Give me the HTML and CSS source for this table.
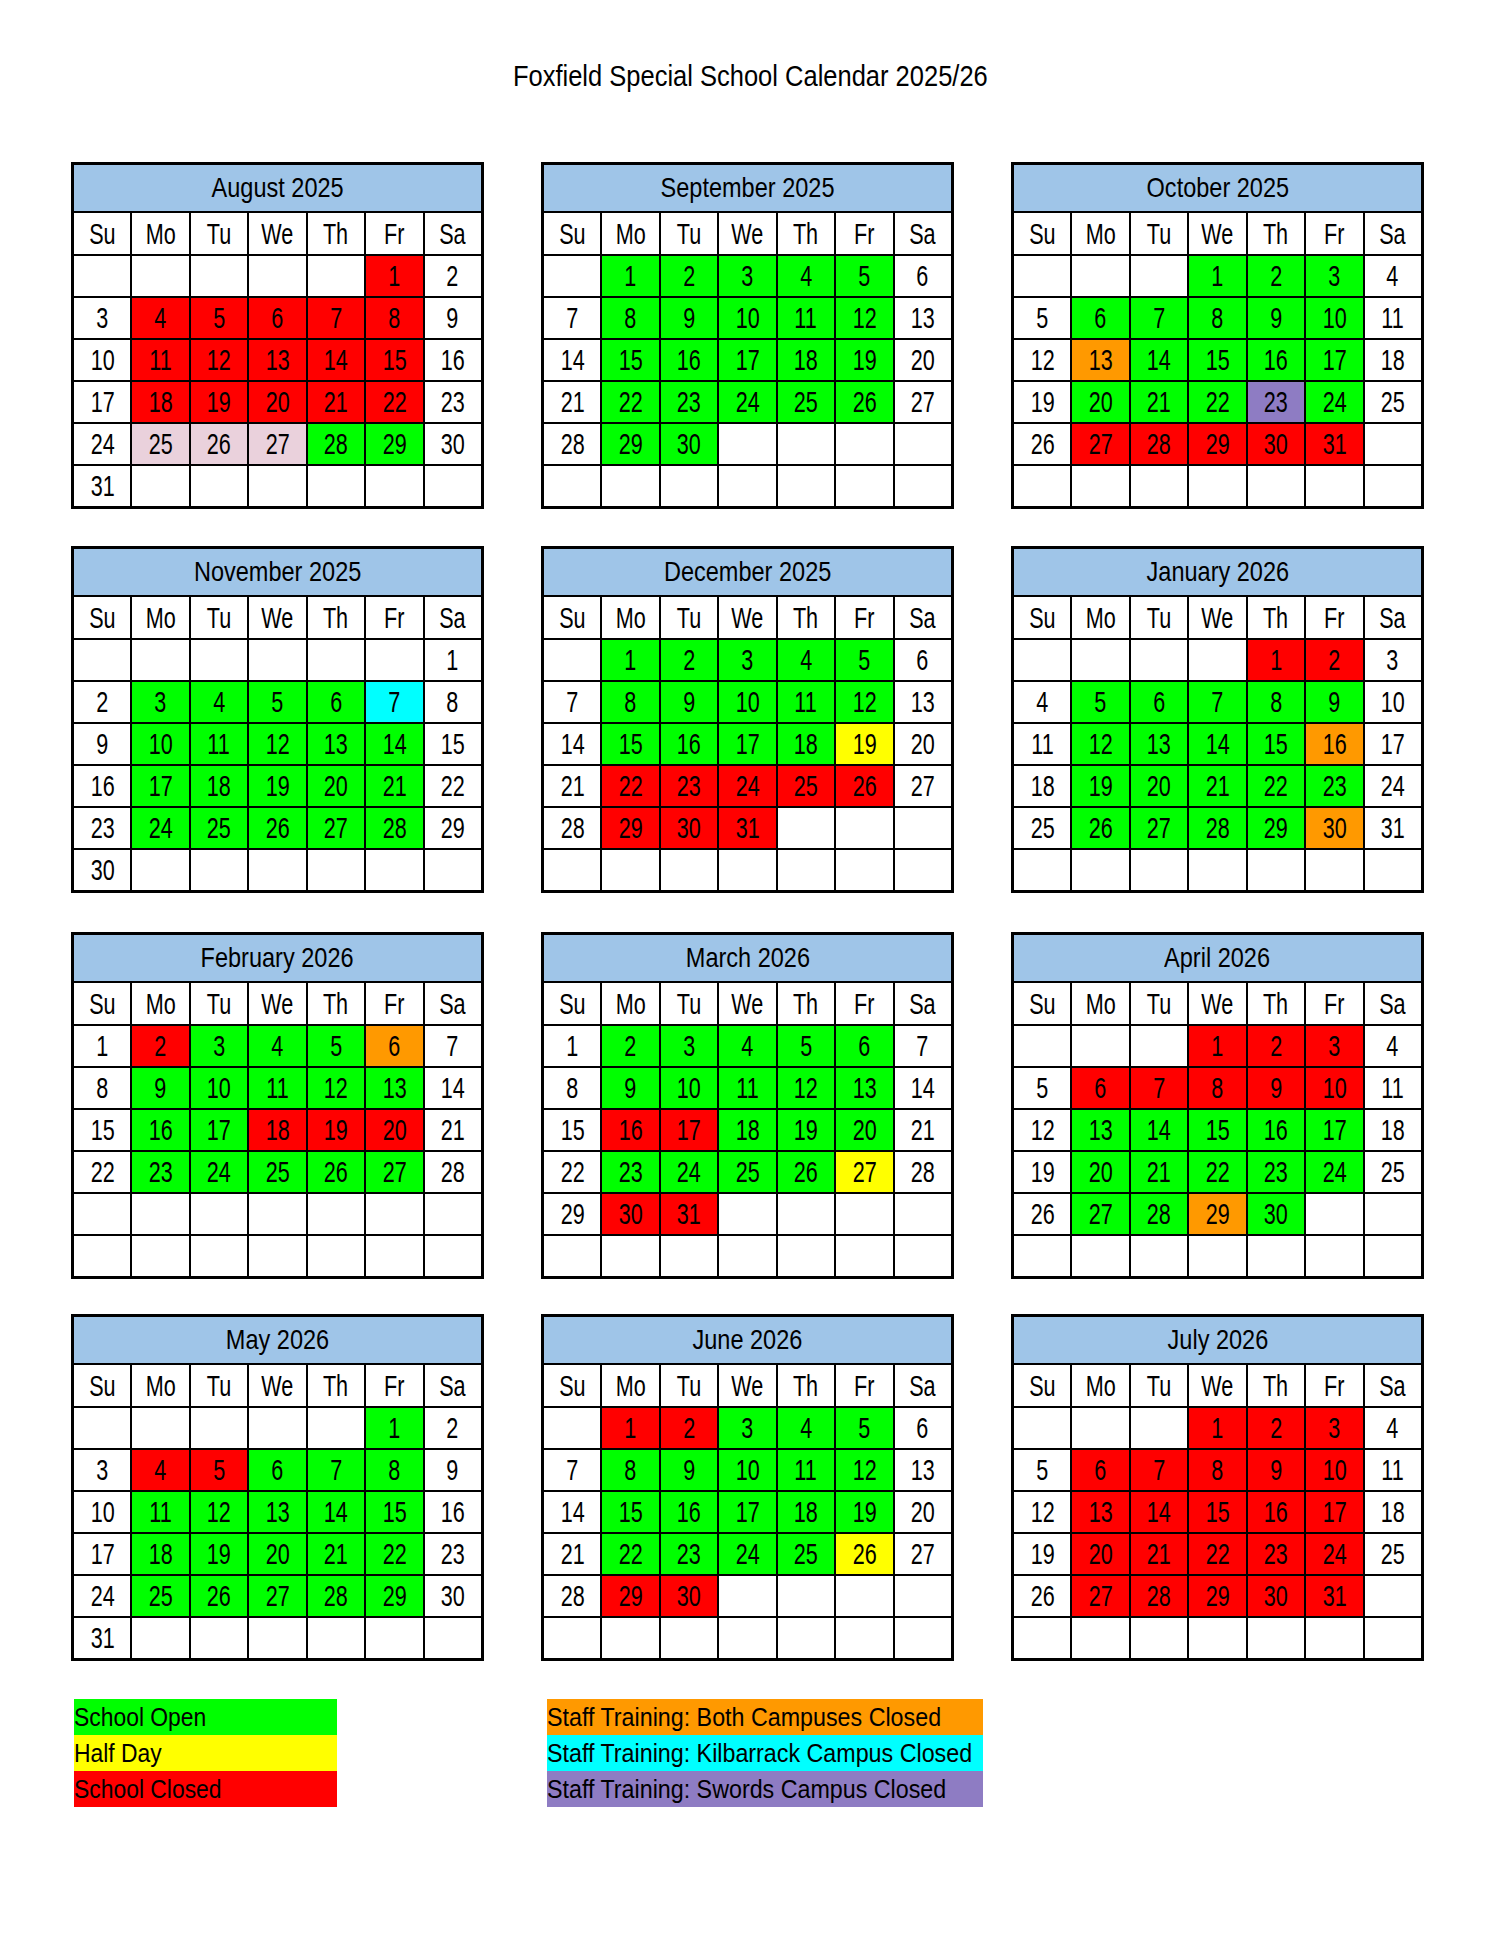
FILE: index.html
```html
<!DOCTYPE html>
<html lang="en">
<head>
<meta charset="utf-8">
<title>Foxfield Special School Calendar 2025/26</title>
<link rel="stylesheet" href="styles.css">
</head>
<body>
<div class="page">
  <h1 class="title"><span>Foxfield Special School Calendar 2025/26</span></h1>

  <div class="months">
    <!-- August 2025 -->
    <div class="cal">
      <div class="mh"><span>August 2025</span></div>
      <div><span>Su</span></div><div><span>Mo</span></div><div><span>Tu</span></div><div><span>We</span></div><div><span>Th</span></div><div><span>Fr</span></div><div><span>Sa</span></div>
      <div></div><div></div><div></div><div></div><div></div><div class="r"><span>1</span></div><div><span>2</span></div>
      <div><span>3</span></div><div class="r"><span>4</span></div><div class="r"><span>5</span></div><div class="r"><span>6</span></div><div class="r"><span>7</span></div><div class="r"><span>8</span></div><div><span>9</span></div>
      <div><span>10</span></div><div class="r"><span>11</span></div><div class="r"><span>12</span></div><div class="r"><span>13</span></div><div class="r"><span>14</span></div><div class="r"><span>15</span></div><div><span>16</span></div>
      <div><span>17</span></div><div class="r"><span>18</span></div><div class="r"><span>19</span></div><div class="r"><span>20</span></div><div class="r"><span>21</span></div><div class="r"><span>22</span></div><div><span>23</span></div>
      <div><span>24</span></div><div class="k"><span>25</span></div><div class="k"><span>26</span></div><div class="k"><span>27</span></div><div class="g"><span>28</span></div><div class="g"><span>29</span></div><div><span>30</span></div>
      <div><span>31</span></div><div></div><div></div><div></div><div></div><div></div><div></div>
    </div>

    <!-- September 2025 -->
    <div class="cal">
      <div class="mh"><span>September 2025</span></div>
      <div><span>Su</span></div><div><span>Mo</span></div><div><span>Tu</span></div><div><span>We</span></div><div><span>Th</span></div><div><span>Fr</span></div><div><span>Sa</span></div>
      <div></div><div class="g"><span>1</span></div><div class="g"><span>2</span></div><div class="g"><span>3</span></div><div class="g"><span>4</span></div><div class="g"><span>5</span></div><div><span>6</span></div>
      <div><span>7</span></div><div class="g"><span>8</span></div><div class="g"><span>9</span></div><div class="g"><span>10</span></div><div class="g"><span>11</span></div><div class="g"><span>12</span></div><div><span>13</span></div>
      <div><span>14</span></div><div class="g"><span>15</span></div><div class="g"><span>16</span></div><div class="g"><span>17</span></div><div class="g"><span>18</span></div><div class="g"><span>19</span></div><div><span>20</span></div>
      <div><span>21</span></div><div class="g"><span>22</span></div><div class="g"><span>23</span></div><div class="g"><span>24</span></div><div class="g"><span>25</span></div><div class="g"><span>26</span></div><div><span>27</span></div>
      <div><span>28</span></div><div class="g"><span>29</span></div><div class="g"><span>30</span></div><div></div><div></div><div></div><div></div>
      <div></div><div></div><div></div><div></div><div></div><div></div><div></div>
    </div>

    <!-- October 2025 -->
    <div class="cal">
      <div class="mh"><span>October 2025</span></div>
      <div><span>Su</span></div><div><span>Mo</span></div><div><span>Tu</span></div><div><span>We</span></div><div><span>Th</span></div><div><span>Fr</span></div><div><span>Sa</span></div>
      <div></div><div></div><div></div><div class="g"><span>1</span></div><div class="g"><span>2</span></div><div class="g"><span>3</span></div><div><span>4</span></div>
      <div><span>5</span></div><div class="g"><span>6</span></div><div class="g"><span>7</span></div><div class="g"><span>8</span></div><div class="g"><span>9</span></div><div class="g"><span>10</span></div><div><span>11</span></div>
      <div><span>12</span></div><div class="o"><span>13</span></div><div class="g"><span>14</span></div><div class="g"><span>15</span></div><div class="g"><span>16</span></div><div class="g"><span>17</span></div><div><span>18</span></div>
      <div><span>19</span></div><div class="g"><span>20</span></div><div class="g"><span>21</span></div><div class="g"><span>22</span></div><div class="p"><span>23</span></div><div class="g"><span>24</span></div><div><span>25</span></div>
      <div><span>26</span></div><div class="r"><span>27</span></div><div class="r"><span>28</span></div><div class="r"><span>29</span></div><div class="r"><span>30</span></div><div class="r"><span>31</span></div><div></div>
      <div></div><div></div><div></div><div></div><div></div><div></div><div></div>
    </div>

    <!-- November 2025 -->
    <div class="cal">
      <div class="mh"><span>November 2025</span></div>
      <div><span>Su</span></div><div><span>Mo</span></div><div><span>Tu</span></div><div><span>We</span></div><div><span>Th</span></div><div><span>Fr</span></div><div><span>Sa</span></div>
      <div></div><div></div><div></div><div></div><div></div><div></div><div><span>1</span></div>
      <div><span>2</span></div><div class="g"><span>3</span></div><div class="g"><span>4</span></div><div class="g"><span>5</span></div><div class="g"><span>6</span></div><div class="c"><span>7</span></div><div><span>8</span></div>
      <div><span>9</span></div><div class="g"><span>10</span></div><div class="g"><span>11</span></div><div class="g"><span>12</span></div><div class="g"><span>13</span></div><div class="g"><span>14</span></div><div><span>15</span></div>
      <div><span>16</span></div><div class="g"><span>17</span></div><div class="g"><span>18</span></div><div class="g"><span>19</span></div><div class="g"><span>20</span></div><div class="g"><span>21</span></div><div><span>22</span></div>
      <div><span>23</span></div><div class="g"><span>24</span></div><div class="g"><span>25</span></div><div class="g"><span>26</span></div><div class="g"><span>27</span></div><div class="g"><span>28</span></div><div><span>29</span></div>
      <div><span>30</span></div><div></div><div></div><div></div><div></div><div></div><div></div>
    </div>

    <!-- December 2025 -->
    <div class="cal">
      <div class="mh"><span>December 2025</span></div>
      <div><span>Su</span></div><div><span>Mo</span></div><div><span>Tu</span></div><div><span>We</span></div><div><span>Th</span></div><div><span>Fr</span></div><div><span>Sa</span></div>
      <div></div><div class="g"><span>1</span></div><div class="g"><span>2</span></div><div class="g"><span>3</span></div><div class="g"><span>4</span></div><div class="g"><span>5</span></div><div><span>6</span></div>
      <div><span>7</span></div><div class="g"><span>8</span></div><div class="g"><span>9</span></div><div class="g"><span>10</span></div><div class="g"><span>11</span></div><div class="g"><span>12</span></div><div><span>13</span></div>
      <div><span>14</span></div><div class="g"><span>15</span></div><div class="g"><span>16</span></div><div class="g"><span>17</span></div><div class="g"><span>18</span></div><div class="y"><span>19</span></div><div><span>20</span></div>
      <div><span>21</span></div><div class="r"><span>22</span></div><div class="r"><span>23</span></div><div class="r"><span>24</span></div><div class="r"><span>25</span></div><div class="r"><span>26</span></div><div><span>27</span></div>
      <div><span>28</span></div><div class="r"><span>29</span></div><div class="r"><span>30</span></div><div class="r"><span>31</span></div><div></div><div></div><div></div>
      <div></div><div></div><div></div><div></div><div></div><div></div><div></div>
    </div>

    <!-- January 2026 -->
    <div class="cal">
      <div class="mh"><span>January 2026</span></div>
      <div><span>Su</span></div><div><span>Mo</span></div><div><span>Tu</span></div><div><span>We</span></div><div><span>Th</span></div><div><span>Fr</span></div><div><span>Sa</span></div>
      <div></div><div></div><div></div><div></div><div class="r"><span>1</span></div><div class="r"><span>2</span></div><div><span>3</span></div>
      <div><span>4</span></div><div class="g"><span>5</span></div><div class="g"><span>6</span></div><div class="g"><span>7</span></div><div class="g"><span>8</span></div><div class="g"><span>9</span></div><div><span>10</span></div>
      <div><span>11</span></div><div class="g"><span>12</span></div><div class="g"><span>13</span></div><div class="g"><span>14</span></div><div class="g"><span>15</span></div><div class="o"><span>16</span></div><div><span>17</span></div>
      <div><span>18</span></div><div class="g"><span>19</span></div><div class="g"><span>20</span></div><div class="g"><span>21</span></div><div class="g"><span>22</span></div><div class="g"><span>23</span></div><div><span>24</span></div>
      <div><span>25</span></div><div class="g"><span>26</span></div><div class="g"><span>27</span></div><div class="g"><span>28</span></div><div class="g"><span>29</span></div><div class="o"><span>30</span></div><div><span>31</span></div>
      <div></div><div></div><div></div><div></div><div></div><div></div><div></div>
    </div>

    <!-- February 2026 -->
    <div class="cal row3">
      <div class="mh"><span>February 2026</span></div>
      <div><span>Su</span></div><div><span>Mo</span></div><div><span>Tu</span></div><div><span>We</span></div><div><span>Th</span></div><div><span>Fr</span></div><div><span>Sa</span></div>
      <div><span>1</span></div><div class="r"><span>2</span></div><div class="g"><span>3</span></div><div class="g"><span>4</span></div><div class="g"><span>5</span></div><div class="o"><span>6</span></div><div><span>7</span></div>
      <div><span>8</span></div><div class="g"><span>9</span></div><div class="g"><span>10</span></div><div class="g"><span>11</span></div><div class="g"><span>12</span></div><div class="g"><span>13</span></div><div><span>14</span></div>
      <div><span>15</span></div><div class="g"><span>16</span></div><div class="g"><span>17</span></div><div class="r"><span>18</span></div><div class="r"><span>19</span></div><div class="r"><span>20</span></div><div><span>21</span></div>
      <div><span>22</span></div><div class="g"><span>23</span></div><div class="g"><span>24</span></div><div class="g"><span>25</span></div><div class="g"><span>26</span></div><div class="g"><span>27</span></div><div><span>28</span></div>
      <div></div><div></div><div></div><div></div><div></div><div></div><div></div>
      <div></div><div></div><div></div><div></div><div></div><div></div><div></div>
    </div>

    <!-- March 2026 -->
    <div class="cal row3">
      <div class="mh"><span>March 2026</span></div>
      <div><span>Su</span></div><div><span>Mo</span></div><div><span>Tu</span></div><div><span>We</span></div><div><span>Th</span></div><div><span>Fr</span></div><div><span>Sa</span></div>
      <div><span>1</span></div><div class="g"><span>2</span></div><div class="g"><span>3</span></div><div class="g"><span>4</span></div><div class="g"><span>5</span></div><div class="g"><span>6</span></div><div><span>7</span></div>
      <div><span>8</span></div><div class="g"><span>9</span></div><div class="g"><span>10</span></div><div class="g"><span>11</span></div><div class="g"><span>12</span></div><div class="g"><span>13</span></div><div><span>14</span></div>
      <div><span>15</span></div><div class="r"><span>16</span></div><div class="r"><span>17</span></div><div class="g"><span>18</span></div><div class="g"><span>19</span></div><div class="g"><span>20</span></div><div><span>21</span></div>
      <div><span>22</span></div><div class="g"><span>23</span></div><div class="g"><span>24</span></div><div class="g"><span>25</span></div><div class="g"><span>26</span></div><div class="y"><span>27</span></div><div><span>28</span></div>
      <div><span>29</span></div><div class="r"><span>30</span></div><div class="r"><span>31</span></div><div></div><div></div><div></div><div></div>
      <div></div><div></div><div></div><div></div><div></div><div></div><div></div>
    </div>

    <!-- April 2026 -->
    <div class="cal row3">
      <div class="mh"><span>April 2026</span></div>
      <div><span>Su</span></div><div><span>Mo</span></div><div><span>Tu</span></div><div><span>We</span></div><div><span>Th</span></div><div><span>Fr</span></div><div><span>Sa</span></div>
      <div></div><div></div><div></div><div class="r"><span>1</span></div><div class="r"><span>2</span></div><div class="r"><span>3</span></div><div><span>4</span></div>
      <div><span>5</span></div><div class="r"><span>6</span></div><div class="r"><span>7</span></div><div class="r"><span>8</span></div><div class="r"><span>9</span></div><div class="r"><span>10</span></div><div><span>11</span></div>
      <div><span>12</span></div><div class="g"><span>13</span></div><div class="g"><span>14</span></div><div class="g"><span>15</span></div><div class="g"><span>16</span></div><div class="g"><span>17</span></div><div><span>18</span></div>
      <div><span>19</span></div><div class="g"><span>20</span></div><div class="g"><span>21</span></div><div class="g"><span>22</span></div><div class="g"><span>23</span></div><div class="g"><span>24</span></div><div><span>25</span></div>
      <div><span>26</span></div><div class="g"><span>27</span></div><div class="g"><span>28</span></div><div class="o"><span>29</span></div><div class="g"><span>30</span></div><div></div><div></div>
      <div></div><div></div><div></div><div></div><div></div><div></div><div></div>
    </div>

    <!-- May 2026 -->
    <div class="cal">
      <div class="mh"><span>May 2026</span></div>
      <div><span>Su</span></div><div><span>Mo</span></div><div><span>Tu</span></div><div><span>We</span></div><div><span>Th</span></div><div><span>Fr</span></div><div><span>Sa</span></div>
      <div></div><div></div><div></div><div></div><div></div><div class="g"><span>1</span></div><div><span>2</span></div>
      <div><span>3</span></div><div class="r"><span>4</span></div><div class="r"><span>5</span></div><div class="g"><span>6</span></div><div class="g"><span>7</span></div><div class="g"><span>8</span></div><div><span>9</span></div>
      <div><span>10</span></div><div class="g"><span>11</span></div><div class="g"><span>12</span></div><div class="g"><span>13</span></div><div class="g"><span>14</span></div><div class="g"><span>15</span></div><div><span>16</span></div>
      <div><span>17</span></div><div class="g"><span>18</span></div><div class="g"><span>19</span></div><div class="g"><span>20</span></div><div class="g"><span>21</span></div><div class="g"><span>22</span></div><div><span>23</span></div>
      <div><span>24</span></div><div class="g"><span>25</span></div><div class="g"><span>26</span></div><div class="g"><span>27</span></div><div class="g"><span>28</span></div><div class="g"><span>29</span></div><div><span>30</span></div>
      <div><span>31</span></div><div></div><div></div><div></div><div></div><div></div><div></div>
    </div>

    <!-- June 2026 -->
    <div class="cal">
      <div class="mh"><span>June 2026</span></div>
      <div><span>Su</span></div><div><span>Mo</span></div><div><span>Tu</span></div><div><span>We</span></div><div><span>Th</span></div><div><span>Fr</span></div><div><span>Sa</span></div>
      <div></div><div class="r"><span>1</span></div><div class="r"><span>2</span></div><div class="g"><span>3</span></div><div class="g"><span>4</span></div><div class="g"><span>5</span></div><div><span>6</span></div>
      <div><span>7</span></div><div class="g"><span>8</span></div><div class="g"><span>9</span></div><div class="g"><span>10</span></div><div class="g"><span>11</span></div><div class="g"><span>12</span></div><div><span>13</span></div>
      <div><span>14</span></div><div class="g"><span>15</span></div><div class="g"><span>16</span></div><div class="g"><span>17</span></div><div class="g"><span>18</span></div><div class="g"><span>19</span></div><div><span>20</span></div>
      <div><span>21</span></div><div class="g"><span>22</span></div><div class="g"><span>23</span></div><div class="g"><span>24</span></div><div class="g"><span>25</span></div><div class="y"><span>26</span></div><div><span>27</span></div>
      <div><span>28</span></div><div class="r"><span>29</span></div><div class="r"><span>30</span></div><div></div><div></div><div></div><div></div>
      <div></div><div></div><div></div><div></div><div></div><div></div><div></div>
    </div>

    <!-- July 2026 -->
    <div class="cal">
      <div class="mh"><span>July 2026</span></div>
      <div><span>Su</span></div><div><span>Mo</span></div><div><span>Tu</span></div><div><span>We</span></div><div><span>Th</span></div><div><span>Fr</span></div><div><span>Sa</span></div>
      <div></div><div></div><div></div><div class="r"><span>1</span></div><div class="r"><span>2</span></div><div class="r"><span>3</span></div><div><span>4</span></div>
      <div><span>5</span></div><div class="r"><span>6</span></div><div class="r"><span>7</span></div><div class="r"><span>8</span></div><div class="r"><span>9</span></div><div class="r"><span>10</span></div><div><span>11</span></div>
      <div><span>12</span></div><div class="r"><span>13</span></div><div class="r"><span>14</span></div><div class="r"><span>15</span></div><div class="r"><span>16</span></div><div class="r"><span>17</span></div><div><span>18</span></div>
      <div><span>19</span></div><div class="r"><span>20</span></div><div class="r"><span>21</span></div><div class="r"><span>22</span></div><div class="r"><span>23</span></div><div class="r"><span>24</span></div><div><span>25</span></div>
      <div><span>26</span></div><div class="r"><span>27</span></div><div class="r"><span>28</span></div><div class="r"><span>29</span></div><div class="r"><span>30</span></div><div class="r"><span>31</span></div><div></div>
      <div></div><div></div><div></div><div></div><div></div><div></div><div></div>
    </div>
  </div>

  <div class="legend">
    <div class="legend-col left">
      <div class="g"><span>School Open</span></div>
      <div class="y"><span>Half Day</span></div>
      <div class="r"><span>School Closed</span></div>
    </div>
    <div class="legend-col right">
      <div class="o"><span>Staff Training: Both Campuses Closed</span></div>
      <div class="c"><span>Staff Training: Kilbarrack Campus Closed</span></div>
      <div class="p"><span>Staff Training: Swords Campus Closed</span></div>
    </div>
  </div>
</div>
</body>
</html>
```

FILE: styles.css
```css
html, body {
  margin: 0;
  padding: 0;
  background: #fff;
}

body {
  font-family: "Liberation Sans", Arial, sans-serif;
  color: #000;
}

.page {
  width: 1500px;
}

.title {
  margin: 0;
  height: 152px;
  display: flex;
  align-items: center;
  justify-content: center;
  font-size: 30px;
  font-weight: normal;
  line-height: 1;
}

.title span {
  display: inline-block;
  transform: scaleX(0.85);
}

.months {
  margin-top: 10px;
  padding-left: 71px;
  display: grid;
  grid-template-columns: repeat(3, 413px);
  column-gap: 57px;
  row-gap: 37px;
}

.cal {
  box-sizing: border-box;
  width: 413px;
  display: grid;
  grid-template-columns: repeat(7, 1fr);
  grid-template-rows: 46px 41px repeat(6, 40px);
  gap: 2px;
  padding: 3px;
  background: #000;
}

.cal.row3 {
  margin-top: 2px;
  margin-bottom: -2px;
}

.cal > div {
  background: #fff;
  display: flex;
  align-items: center;
  justify-content: center;
  font-size: 30px;
  line-height: 1;
  overflow: hidden;
}

.cal > div span {
  display: inline-block;
  transform: scaleX(0.72);
}

.cal > .mh {
  grid-column: 1 / -1;
  background: #9fc5e8;
  font-size: 28px;
}

.cal > .mh span {
  transform: scaleX(0.84);
}

.cal > .g, .legend .g { background: #00ff00; }
.cal > .r, .legend .r { background: #ff0000; }
.cal > .y, .legend .y { background: #ffff00; }
.cal > .o, .legend .o { background: #ff9900; }
.cal > .c, .legend .c { background: #00ffff; }
.cal > .p, .legend .p { background: #8e7cc3; }
.cal > .k { background: #ead1dc; }

.legend {
  margin-top: 38px;
  padding-left: 74px;
  display: flex;
  column-gap: 210px;
}

.legend-col.left { width: 263px; }
.legend-col.right { width: 436px; }

.legend-col > div {
  height: 36px;
  display: flex;
  align-items: center;
  font-size: 26px;
  line-height: 1;
  white-space: nowrap;
}

.legend-col > div span {
  display: inline-block;
  transform: scaleX(0.88);
  transform-origin: left center;
}

.legend-col.right > div span {
  transform: scaleX(0.895);
}
```
